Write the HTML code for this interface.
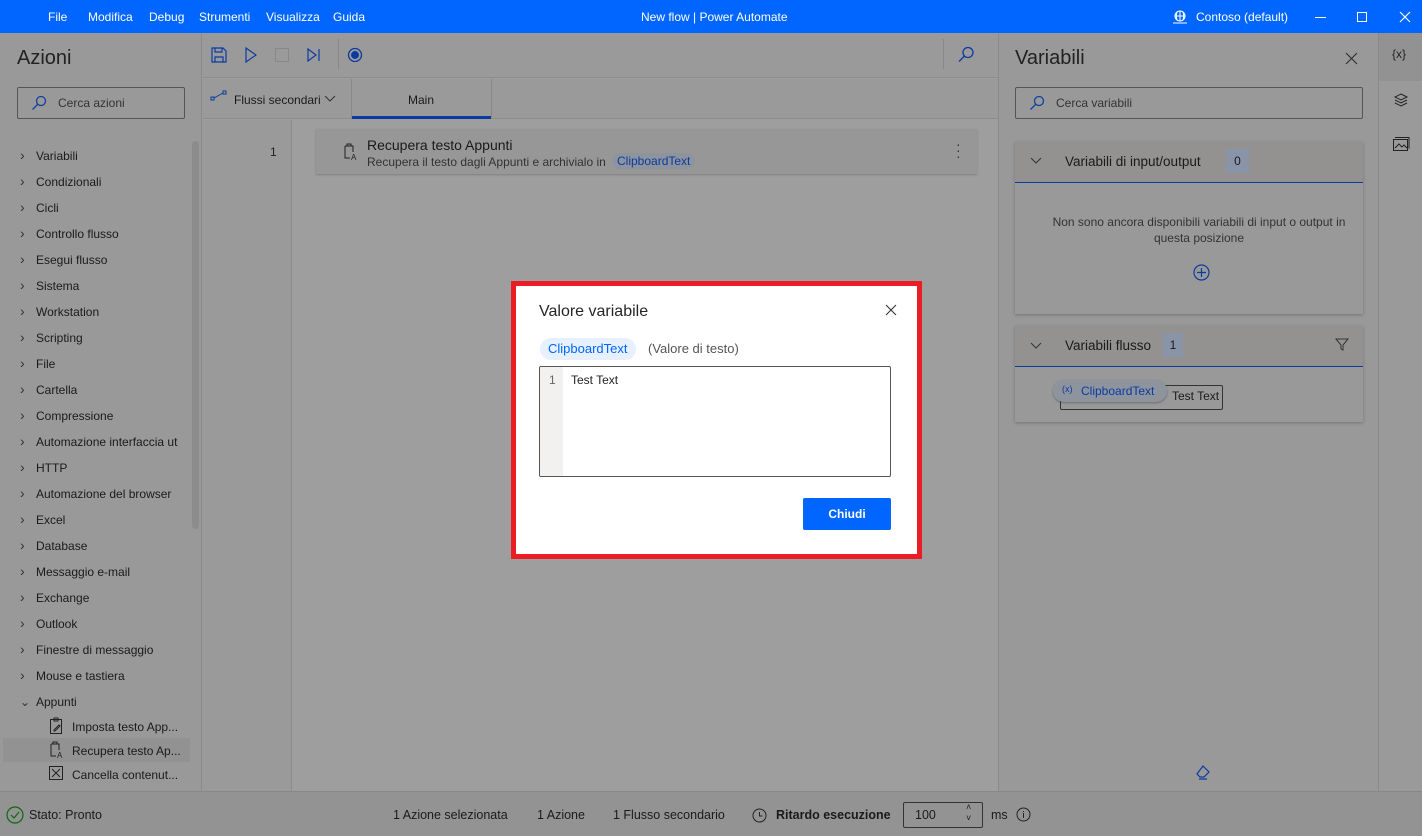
<!DOCTYPE html>
<html><head><meta charset="utf-8"><style>
*{box-sizing:border-box;margin:0;padding:0}
body{width:1422px;height:836px;overflow:hidden;font-family:"Liberation Sans",sans-serif;font-size:12px;color:#1e1e1e;background:#9a9a9a;position:relative}
.a{position:absolute}
.top{left:0;top:0;width:1422px;height:33px;background:#0066ff;color:#fff;font-size:12px}
.top span{position:absolute;top:10px}
.lp{left:0;top:33px;width:202px;height:758px;background:#999;border-right:1px solid #8a8a8a}
.item{position:absolute;left:20px;font-size:12px;color:#1a1a1a}
.item i{font-style:normal;display:inline-block;width:16px;color:#333;font-size:14px;line-height:12px}
.sub{position:absolute;left:72px;font-size:12px;color:#1a1a1a}
.canvas{left:203px;top:33px;width:795px;height:758px;background:#9e9e9e}
.rp{left:998px;top:33px;width:380px;height:758px;background:#999;border-left:1px solid #8a8a8a}
.rs{left:1378px;top:33px;width:44px;height:758px;background:#9a9a9a;border-left:1px solid #8a8a8a}
.status{left:0;top:791px;width:1422px;height:45px;background:#939393;border-top:1px solid #888}
.status span{position:absolute;top:16px;font-size:12.5px;color:#1a1a1a}
</style></head><body>
<div class="a top">
<span style="left:48px">File</span><span style="left:88px">Modifica</span><span style="left:149px">Debug</span><span style="left:199px">Strumenti</span><span style="left:266px">Visualizza</span><span style="left:333px">Guida</span>
<span style="left:641px">New flow | Power Automate</span>
<svg class="a" style="left:1172px;top:10px" width="16" height="14" viewBox="0 0 16 14" fill="none" stroke="#fff" stroke-width="1.1"><circle cx="8" cy="6" r="5"/><path d="M3 6h10M8 1v10M5 2c-1 3-1 5 0 8M11 2c1 3 1 5 0 8M1 13h14"/></svg>
<span style="left:1196px">Contoso (default)</span>
<div class="a" style="left:1315px;top:17px;width:11px;height:1px;background:#fff"></div>
<div class="a" style="left:1357px;top:12px;width:10px;height:10px;border:1px solid #fff"></div>
<svg class="a" style="left:1399px;top:11px" width="12" height="12" stroke="#fff" stroke-width="1.2"><path d="M1 1l10 10M11 1L1 11"/></svg>
</div>

<div class="a lp">
<div class="a" style="left:17px;top:14px;font-size:20px;color:#222">Azioni</div>
<div class="a" style="left:17px;top:54px;width:168px;height:32px;border:1px solid #555;border-radius:2px"></div>
<svg class="a" style="left:31px;top:62px" width="16" height="16" fill="none" stroke="#1040a0" stroke-width="1.3"><circle cx="10" cy="6" r="4.5"/><path d="M7 9l-5.5 5.5"/></svg>
<div class="a" style="left:58px;top:63px;color:#333">Cerca azioni</div>
<div class="a" style="left:192px;top:108px;width:7px;height:388px;background:#8c8c8c;border-radius:4px"></div>
</div>
<div class="item" style="top:149px"><i>›</i>Variabili</div>
<div class="item" style="top:175px"><i>›</i>Condizionali</div>
<div class="item" style="top:201px"><i>›</i>Cicli</div>
<div class="item" style="top:227px"><i>›</i>Controllo flusso</div>
<div class="item" style="top:253px"><i>›</i>Esegui flusso</div>
<div class="item" style="top:279px"><i>›</i>Sistema</div>
<div class="item" style="top:305px"><i>›</i>Workstation</div>
<div class="item" style="top:331px"><i>›</i>Scripting</div>
<div class="item" style="top:357px"><i>›</i>File</div>
<div class="item" style="top:383px"><i>›</i>Cartella</div>
<div class="item" style="top:409px"><i>›</i>Compressione</div>
<div class="item" style="top:435px"><i>›</i>Automazione interfaccia ut</div>
<div class="item" style="top:461px"><i>›</i>HTTP</div>
<div class="item" style="top:487px"><i>›</i>Automazione del browser</div>
<div class="item" style="top:513px"><i>›</i>Excel</div>
<div class="item" style="top:539px"><i>›</i>Database</div>
<div class="item" style="top:565px"><i>›</i>Messaggio e-mail</div>
<div class="item" style="top:591px"><i>›</i>Exchange</div>
<div class="item" style="top:617px"><i>›</i>Outlook</div>
<div class="item" style="top:643px"><i>›</i>Finestre di messaggio</div>
<div class="item" style="top:669px"><i>›</i>Mouse e tastiera</div>
<div class="item" style="top:695px"><i style="font-size:12px">⌄</i>Appunti</div>
<div class="a" style="left:3px;top:738px;width:187px;height:24px;background:#929292"></div>
<svg class="a" style="left:49px;top:717px" width="14" height="17" fill="none" stroke="#222"><path d="M1.5 2.5h11v14h-11zM5 1h4v3H5z"/><path d="M5 13l5-5 1 1-5 5H5z"/></svg>
<div class="sub" style="top:720px">Imposta testo App...</div>
<svg class="a" style="left:48px;top:741px" width="16" height="18" fill="none" stroke="#222" stroke-width="1"><path d="M3 3h8v6M3 3v12h5M5 3V1h4v2"/><text x="9" y="17" font-size="8" fill="#222" stroke="none" font-family="Liberation Sans">A</text></svg>
<div class="sub" style="top:744px">Recupera testo Ap...</div>
<svg class="a" style="left:49px;top:766px" width="14" height="14" fill="none" stroke="#222"><rect x=".5" y=".5" width="13" height="13"/><path d="M3 3l8 8M11 3l-8 8"/></svg>
<div class="sub" style="top:768px">Cancella contenut...</div>

<div class="a canvas">
<div class="a" style="left:0;top:0;width:795px;height:45px;background:#9a9a9a;border-bottom:1px solid #8c8c8c"></div>
<svg class="a" style="left:8px;top:14px" width="16" height="16" fill="none" stroke="#0b3aa0" stroke-width="1.2"><path d="M1 1h11l3 3v11H1z"/><path d="M4 1v4h7V1M4 15v-5h8v5"/></svg>
<svg class="a" style="left:42px;top:14px" width="12" height="16" fill="none" stroke="#0b3aa0" stroke-width="1.2"><path d="M1 1l10 7-10 7z"/></svg>
<div class="a" style="left:72px;top:15px;width:14px;height:14px;border:1px solid #888"></div>
<svg class="a" style="left:104px;top:15px" width="14" height="14" fill="none" stroke="#0b3aa0" stroke-width="1.2"><path d="M1 1l8 6-8 6zM12 1v12"/></svg>
<div class="a" style="left:135px;top:6px;width:1px;height:30px;background:#888"></div>
<svg class="a" style="left:144px;top:14px" width="16" height="16" fill="none" stroke="#0b3aa0" stroke-width="1.3"><circle cx="8" cy="8" r="6.5"/><circle cx="8" cy="8" r="3.3" fill="#0b3aa0"/></svg>
<div class="a" style="left:740px;top:6px;width:1px;height:30px;background:#888"></div>
<svg class="a" style="left:755px;top:13px" width="17" height="17" fill="none" stroke="#0b3aa0" stroke-width="1.3"><circle cx="10" cy="6.5" r="5"/><path d="M6.5 10l-5.5 5.5"/></svg>
<div class="a" style="left:0;top:46px;width:795px;height:40px;background:#9a9a9a;border-bottom:1px solid #8c8c8c"></div>
<svg class="a" style="left:7px;top:57px" width="18" height="12" fill="none" stroke="#0b3aa0"><rect x="1" y="7" width="3" height="3"/><rect x="13" y="1" width="3" height="3"/><path d="M4 8l9-5"/></svg>
<div class="a" style="left:31px;top:60px;color:#1a1a1a">Flussi secondari</div>
<svg class="a" style="left:121px;top:62px" width="12" height="8" fill="none" stroke="#333"><path d="M1 1l5 5 5-5"/></svg>
<div class="a" style="left:148px;top:46px;width:1px;height:40px;background:#888"></div>
<div class="a" style="left:288px;top:46px;width:1px;height:40px;background:#888"></div>
<div class="a" style="left:205px;top:60px;color:#1a1a1a">Main</div>
<div class="a" style="left:149px;top:83px;width:139px;height:3px;background:#0b3aa0"></div>
<div class="a" style="left:0;top:87px;width:89px;height:671px;background:#9a9a9a;border-right:1px solid #8c8c8c"></div>
<div class="a" style="left:67px;top:112px;color:#222">1</div>
<div class="a" style="left:113px;top:96px;width:661px;height:45px;background:#979797;box-shadow:0 1px 2px rgba(0,0,0,.2)"></div>
<svg class="a" style="left:139px;top:110px" width="16" height="18" fill="none" stroke="#222" stroke-width="1"><path d="M3 3h8v6M3 3v12h5M5 3V1h4v2"/><text x="9" y="17" font-size="8" fill="#222" stroke="none" font-family="Liberation Sans">A</text></svg>
<div class="a" style="left:164px;top:104px;font-size:14px;color:#1a1a1a">Recupera testo Appunti</div>
<div class="a" style="left:164px;top:122px;color:#333">Recupera il testo dagli Appunti e archivialo in</div>
<div class="a" style="left:409px;top:120px;padding:1px 5px;background:#8e949e;border-radius:8px;color:#0b3aa0">ClipboardText</div>
<div class="a" style="left:753px;top:108px;color:#333;font-size:14px;line-height:6px">·<br>·<br>·</div>
</div>

<div class="a rp">
<div class="a" style="left:16px;top:14px;font-size:20px;color:#222">Variabili</div>
<svg class="a" style="left:346px;top:19px" width="13" height="13" stroke="#333" stroke-width="1.2"><path d="M1 1l11 11M12 1L1 12"/></svg>
<div class="a" style="left:16px;top:54px;width:348px;height:32px;border:1px solid #555;border-radius:2px"></div>
<svg class="a" style="left:30px;top:62px" width="16" height="16" fill="none" stroke="#1040a0" stroke-width="1.3"><circle cx="10" cy="6" r="4.5"/><path d="M7 9l-5.5 5.5"/></svg>
<div class="a" style="left:57px;top:63px;color:#333">Cerca variabili</div>
<div class="a" style="left:16px;top:109px;width:348px;height:172px;background:#999;box-shadow:0 1px 3px rgba(0,0,0,.25)"></div>
<div class="a" style="left:16px;top:109px;width:348px;height:41px;background:#949290;border-bottom:1px solid #0b3aa0"></div>
<svg class="a" style="left:31px;top:124px" width="12" height="8" fill="none" stroke="#333"><path d="M1 1l5 5 5-5"/></svg>
<div class="a" style="left:66px;top:121px;font-size:13.5px;color:#1a1a1a">Variabili di input/output</div>
<div class="a" style="left:227px;top:116px;width:23px;height:24px;background:#8994a8;text-align:center;line-height:24px;color:#1a1a1a">0</div>
<div class="a" style="left:40px;top:181px;width:320px;text-align:center;color:#333;line-height:16px">Non sono ancora disponibili variabili di input o output in questa posizione</div>
<svg class="a" style="left:194px;top:231px" width="17" height="17" fill="none" stroke="#0b3aa0" stroke-width="1.2"><circle cx="8.5" cy="8.5" r="7.5"/><path d="M8.5 4v9M4 8.5h9"/></svg>
<div class="a" style="left:16px;top:293px;width:348px;height:96px;background:#999;box-shadow:0 1px 3px rgba(0,0,0,.25)"></div>
<div class="a" style="left:16px;top:293px;width:348px;height:41px;background:#949290;border-bottom:1px solid #0b3aa0"></div>
<svg class="a" style="left:31px;top:309px" width="12" height="8" fill="none" stroke="#333"><path d="M1 1l5 5 5-5"/></svg>
<div class="a" style="left:66px;top:305px;font-size:13.5px;color:#1a1a1a">Variabili flusso</div>
<div class="a" style="left:164px;top:300px;width:20px;height:24px;background:#8994a8;text-align:center;line-height:24px;color:#1a1a1a">1</div>
<svg class="a" style="left:336px;top:305px" width="14" height="13" fill="none" stroke="#333"><path d="M1 1h12l-5 6v5l-2-1V7z"/></svg>
<div class="a" style="left:61px;top:352px;width:163px;height:25px;border:1px solid #333;border-radius:2px"></div>
<div class="a" style="left:173px;top:356px;color:#1a1a1a">Test Text</div>
<div class="a" style="left:54px;top:347px;width:114px;height:22px;background:#8e949e;border-radius:11px;box-shadow:0 1px 2px rgba(0,0,0,.3)"></div>
<div class="a" style="left:63px;top:351px;font-size:9px;color:#0b3aa0">(x)</div>
<div class="a" style="left:82px;top:351px;color:#0b3aa0">ClipboardText</div>
<svg class="a" style="left:195px;top:732px" width="17" height="15" fill="none" stroke="#0b3aa0" stroke-width="1.2"><path d="M9 1l6 6-5 5H6L3 9zM5 14h8"/></svg>
</div>

<div class="a rs">
<div class="a" style="left:0;top:0;width:44px;height:48px;background:#929292"></div>
<div class="a" style="left:13px;top:14px;color:#222;font-size:12px">{x}</div>
<svg class="a" style="left:14px;top:59px" width="16" height="16" fill="none" stroke="#222"><path d="M8 2l6 3-6 3-6-3zM2 8l6 3 6-3M2 11l6 3 6-3"/></svg>
<svg class="a" style="left:14px;top:104px" width="17" height="14" fill="none" stroke="#222"><rect x=".5" y="2.5" width="14" height="11"/><path d="M2 .5h14v11M2 11l4-4 3 3 2-2 3 3"/></svg>
</div>

<div class="a status">
<svg class="a" style="left:6px;top:14px" width="18" height="18" fill="none" stroke="#0a6a0a" stroke-width="1.2"><circle cx="9" cy="9" r="8"/><path d="M5 9l3 3 5-6"/></svg>
<span style="left:29px">Stato: Pronto</span>
<span style="left:393px">1 Azione selezionata</span>
<span style="left:537px">1 Azione</span>
<span style="left:613px">1 Flusso secondario</span>
<svg class="a" style="left:752px;top:16px" width="15" height="15" fill="none" stroke="#222"><circle cx="7.5" cy="7.5" r="6.5"/><path d="M7.5 4v4h3"/></svg>
<span style="left:776px;font-weight:bold">Ritardo esecuzione</span>
<div class="a" style="left:903px;top:10px;width:80px;height:26px;border:1px solid #333;border-radius:2px"></div>
<span style="left:915px">100</span>
<span style="left:966px;top:10px;font-size:9px;line-height:11px">˄<br>˅</span>
<span style="left:991px">ms</span>
<svg class="a" style="left:1016px;top:15px" width="15" height="15" fill="none" stroke="#222"><circle cx="7.5" cy="7.5" r="6.5"/><path d="M7.5 6v5M7.5 4v1"/></svg>
</div>

<div class="a" style="left:511px;top:281px;width:411px;height:278px;border:5px solid #ec1c24;background:#fff">
<div class="a" style="left:23px;top:17px;font-size:16px;color:#252525">Valore variabile</div>
<svg class="a" style="left:369px;top:18px" width="12" height="12" stroke="#333" stroke-width="1.1"><path d="M1 1l10 10M11 1L1 11"/></svg>
<div class="a" style="left:24px;top:52px;height:22px;padding:0 8px;background:#e6f0ff;border-radius:11px;color:#0066ff;font-size:13px;line-height:22px">ClipboardText</div>
<div class="a" style="left:132px;top:55px;color:#555;font-size:13px">(Valore di testo)</div>
<div class="a" style="left:23px;top:80px;width:352px;height:111px;border:1px solid #555;border-radius:2px;overflow:hidden">
<div class="a" style="left:0;top:0;width:23px;height:111px;background:#f2f1f0"></div>
<div class="a" style="left:9px;top:6px;color:#666">1</div>
<div class="a" style="left:31px;top:6px;color:#222">Test Text</div>
</div>
<div class="a" style="left:287px;top:212px;width:88px;height:32px;background:#0066ff;border-radius:2px;color:#fff;font-weight:bold;text-align:center;line-height:32px">Chiudi</div>
</div>
</body></html>
